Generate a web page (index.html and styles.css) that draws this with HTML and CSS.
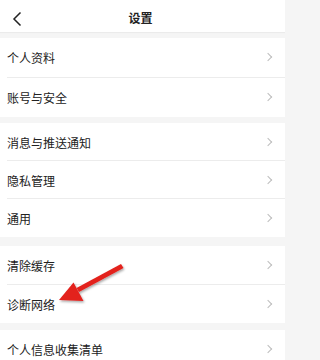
FILE: index.html
```html
<!DOCTYPE html>
<html lang="zh-CN">
<head>
<meta charset="utf-8">
<link rel="stylesheet" href="styles.css">
</head>
<body>
<div class="page">
  <header class="topbar">
    <svg class="back" width="12" height="16" viewBox="0 0 12 16"><path d="M9.5 1.5 L3 8 L9.5 14.5" fill="none" stroke="#222" stroke-width="1.5"/></svg>
    <div class="title">设置</div>
  </header>
  <div class="gap g6"></div>
  <section class="group tall">
    <div class="row"><span>个人资料</span><i class="chev"></i></div>
    <div class="row"><span>账号与安全</span><i class="chev"></i></div>
  </section>
  <div class="gap g6"></div>
  <section class="group">
    <div class="row"><span>消息与推送通知</span><i class="chev"></i></div>
    <div class="row"><span>隐私管理</span><i class="chev"></i></div>
    <div class="row"><span>通用</span><i class="chev"></i></div>
  </section>
  <div class="gap g9"></div>
  <section class="group mid">
    <div class="row"><span>清除缓存</span><i class="chev"></i></div>
    <div class="row"><span>诊断网络</span><i class="chev"></i></div>
  </section>
  <div class="gap g7"></div>
  <section class="group mid">
    <div class="row"><span>个人信息收集清单</span><i class="chev"></i></div>
  </section>
  <svg class="annot" width="285" height="360" viewBox="0 0 285 360">
    <defs>
      <filter id="sh" x="-20%" y="-20%" width="140%" height="140%">
        <feDropShadow dx="1" dy="1.5" stdDeviation="1.2" flood-color="#000" flood-opacity="0.35"/>
      </filter>
    </defs>
    <g filter="url(#sh)" fill="#e3201c">
      <polygon points="121,264 123.5,268 79,292 76.5,288"/>
      <polygon points="59,300 73.5,282.5 83.5,301"/>
    </g>
  </svg>
</div>
</body>
</html>
```
FILE: styles.css
```css
html, body {
  margin: 0;
  padding: 0;
  background: #f5f5f5;
}
.page {
  position: relative;
  width: 285px;
  height: 360px;
  overflow: hidden;
  font-family: "Noto Sans CJK SC", "Noto Sans", sans-serif;
  color: #222;
}
.topbar {
  height: 32px;
  background: #fff;
  display: flex;
  align-items: center;
  justify-content: center;
  position: relative;
  box-shadow: 0 1px 1px rgba(0,0,0,0.04);
}
.back {
  position: absolute;
  left: 11px;
  top: 11px;
}
.title {
  font-size: 12px;
  font-weight: 700;
  margin-left: -4px;
  margin-top: 2px;
}
.gap.g6 { height: 6px; }
.gap.g7 { height: 7px; }
.gap.g9 { height: 9px; }
.group {
  background: #fff;
  padding-left: 7px;
}
.row {
  height: 38px;
  display: flex;
  align-items: center;
  justify-content: space-between;
  font-size: 12px;
  border-bottom: 1px solid #ececec;
  box-sizing: border-box;
  padding-right: 14px;
}
.group.tall .row { height: 39.5px; }
.group.mid .row { height: 38.5px; }
.row:last-child { border-bottom: none; }
.row span { margin-top: 1px; }
.chev {
  width: 5px;
  height: 5px;
  border-top: 1.2px solid #bdbdbd;
  border-right: 1.2px solid #bdbdbd;
  transform: rotate(45deg);
  display: block;
}
.annot {
  position: absolute;
  left: 0;
  top: 0;
  pointer-events: none;
}
```
